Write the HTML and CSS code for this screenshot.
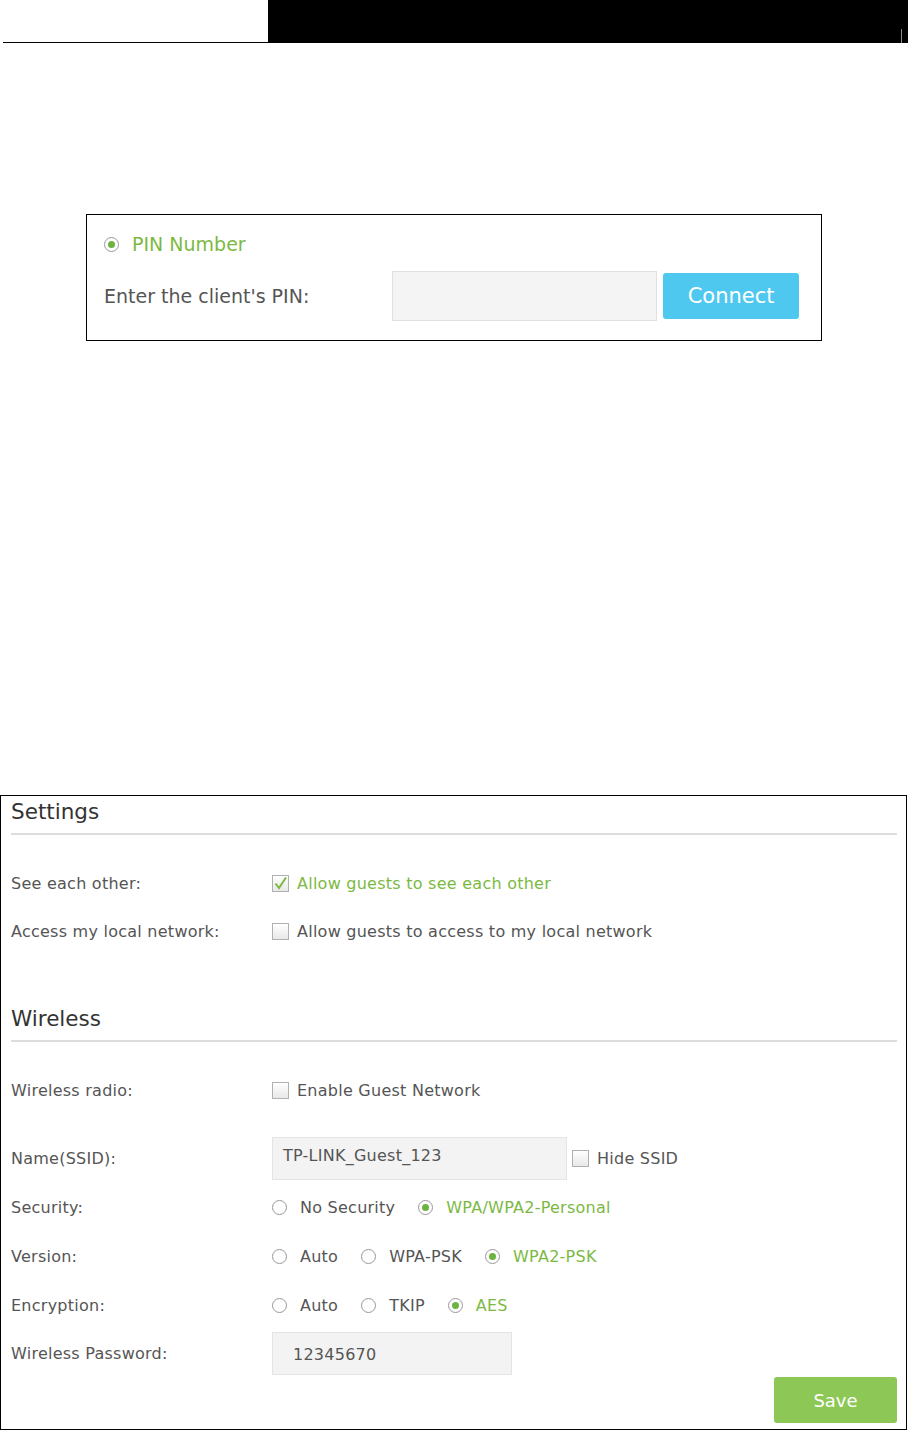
FILE: index.html
```html
<!DOCTYPE html>
<html lang="en">
<head>
    <meta charset="UTF-8">
    <title>Guest Network</title>
    <link rel="stylesheet" href="styles.css">
</head>
<body>

<!-- page header -->
<div class="pageHeader">
    <div class="headerLeft"></div>
    <div class="headerBar"><span class="headerTick"></span></div>
</div>

<!-- WPS PIN box -->
<div class="pinBox">
    <div class="pinRow">
        <span class="radio checked pinRadio"></span>
        <span class="greenText pinTitle">PIN Number</span>
    </div>
    <div class="pinRow">
        <span class="pinLabel">Enter the client's PIN:</span>
        <input type="text" class="pinInput">
        <button type="button" class="connectButton">Connect</button>
    </div>
</div>

<!-- Guest network settings -->
<div class="guestPanel">
    <h2 class="sectionTitle">Settings</h2>
    <div class="formRow">
        <span class="rowLabel">See each other:</span>
        <span class="checkbox checked"><svg width="15" height="15" viewBox="0 0 15 15"><path d="M2.5 7.5 L6 12 L13 1.5" fill="none" stroke="#7cb944" stroke-width="2"/></svg></span>
        <span class="greenText">Allow guests to see each other</span>
    </div>
    <div class="formRow">
        <span class="rowLabel">Access my local network:</span>
        <span class="checkbox"></span>
        <span>Allow guests to access to my local network</span>
    </div>

    <h2 class="sectionTitle wirelessTitle">Wireless</h2>
    <div class="formRow radioRow">
        <span class="rowLabel">Wireless radio:</span>
        <span class="checkbox"></span>
        <span>Enable Guest Network</span>
    </div>
    <div class="formRow tallRow">
        <span class="rowLabel">Name(SSID):</span>
        <div class="textBox ssidBox">TP-LINK_Guest_123</div>
        <span class="checkbox hideBox"></span>
        <span>Hide SSID</span>
    </div>
    <div class="formRow tallRow">
        <span class="rowLabel">Security:</span>
        <span class="radio"></span><span class="opt">No Security</span>
        <span class="radio checked"></span><span class="opt greenText">WPA/WPA2-Personal</span>
    </div>
    <div class="formRow tallRow">
        <span class="rowLabel">Version:</span>
        <span class="radio"></span><span class="opt">Auto</span>
        <span class="radio"></span><span class="opt">WPA-PSK</span>
        <span class="radio checked"></span><span class="opt greenText">WPA2-PSK</span>
    </div>
    <div class="formRow tallRow">
        <span class="rowLabel">Encryption:</span>
        <span class="radio"></span><span class="opt">Auto</span>
        <span class="radio"></span><span class="opt">TKIP</span>
        <span class="radio checked"></span><span class="opt greenText">AES</span>
    </div>
    <div class="formRow passRow">
        <span class="rowLabel">Wireless Password:</span>
        <div class="textBox passBox">12345670</div>
    </div>
    <div class="saveRow">
        <button type="button" class="saveButton">Save</button>
    </div>
</div>

</body>
</html>
```

FILE: styles.css
```css
body {
    margin: 0;
    font-family: "DejaVu Sans", Verdana, sans-serif;
    font-size: 16px;
    letter-spacing: 0.25px;
    color: #555;
    background-color: #fff;
}

.pageHeader {
    display: flex;
    height: 43px;
}

.headerLeft {
    width: 265px;
    margin-left: 3px;
    border-bottom: 1px solid #000;
}

.headerBar {
    flex: 1;
    background-color: #000;
    display: flex;
    justify-content: flex-end;
    align-items: flex-end;
    padding-right: 6px;
}

.headerTick {
    width: 1px;
    height: 14px;
    background-color: #888;
}

.greenText {
    color: #7cb944;
}

/* pin box */
.pinBox {
    width: 736px;
    height: 127px;
    box-sizing: border-box;
    margin: 171px 0 0 86px;
    border: 1px solid #000;
    padding: 16px 22px 0 17px;
    letter-spacing: 0;
}

.pinRow {
    display: flex;
    align-items: center;
    height: 26px;
}

.pinRow + .pinRow {
    height: 50px;
    margin-top: 14px;
}

.pinRadio {
    width: 14px;
    height: 14px;
}

.pinTitle {
    font-size: 19px;
    margin-left: 13px;
}

.pinLabel {
    font-size: 19px;
    width: 288px;
    color: #555;
}

.pinInput {
    width: 266px;
    height: 50px;
    box-sizing: border-box;
    border: 1px solid #e0e0e0;
    background-color: #f4f4f4;
    margin: 0;
}

.connectButton {
    width: 136px;
    height: 46px;
    margin-left: 6px;
    border: none;
    border-radius: 3px;
    background-color: #4fc8f0;
    color: #fff;
    font-family: "DejaVu Sans", Verdana, sans-serif;
    font-size: 21px;
}

/* radio + checkbox */
.radio {
    width: 13px;
    height: 13px;
    border: 1px solid #999;
    border-radius: 50%;
    background-color: #fff;
    display: inline-flex;
    align-items: center;
    justify-content: center;
    flex-shrink: 0;
}

.radio.checked::after {
    content: "";
    width: 7px;
    height: 7px;
    border-radius: 50%;
    background-color: #6db33f;
}

.checkbox {
    width: 15px;
    height: 15px;
    border: 1px solid #b0b0b0;
    background: linear-gradient(#fff, #e8e8e8);
    margin-right: 8px;
    display: inline-flex;
    flex-shrink: 0;
}

.checkbox svg {
    display: block;
}

/* guest panel */
.guestPanel {
    width: 907px;
    box-sizing: border-box;
    margin-top: 454px;
    border: 1px solid #000;
    padding: 0 9px 6px 10px;
}

.sectionTitle {
    margin: 0;
    font-size: 21.5px;
    font-weight: normal;
    letter-spacing: 0;
    color: #333;
    height: 37px;
    line-height: 32px;
    border-bottom: 2px solid #ddd;
}

.wirelessTitle {
    margin-top: 48px;
}

.formRow {
    display: flex;
    align-items: center;
    height: 48px;
}

.sectionTitle + .formRow {
    margin-top: 24px;
}

.wirelessTitle + .radioRow {
    margin-top: 24px;
}

.radioRow {
    margin-bottom: 20px;
}

.tallRow {
    height: 49px;
}

.passRow {
    height: 47px;
}

.rowLabel {
    width: 261px;
    flex-shrink: 0;
}

.opt {
    margin: 0 23px 0 13px;
}

.textBox {
    box-sizing: border-box;
    height: 43px;
    background-color: #f3f3f3;
    border: 1px solid #e4e4e4;
    padding: 8px 10px;
}

.ssidBox {
    width: 295px;
    margin-right: 5px;
}

.passBox {
    width: 240px;
    padding: 12px 20px;
}

.hideBox {
    margin-right: 8px;
}

.saveRow {
    display: flex;
    justify-content: flex-end;
}

.saveButton {
    width: 123px;
    height: 46px;
    border: none;
    border-radius: 3px;
    background-color: #8dc756;
    color: #fff;
    font-family: "DejaVu Sans", Verdana, sans-serif;
    font-size: 18px;
}
```
